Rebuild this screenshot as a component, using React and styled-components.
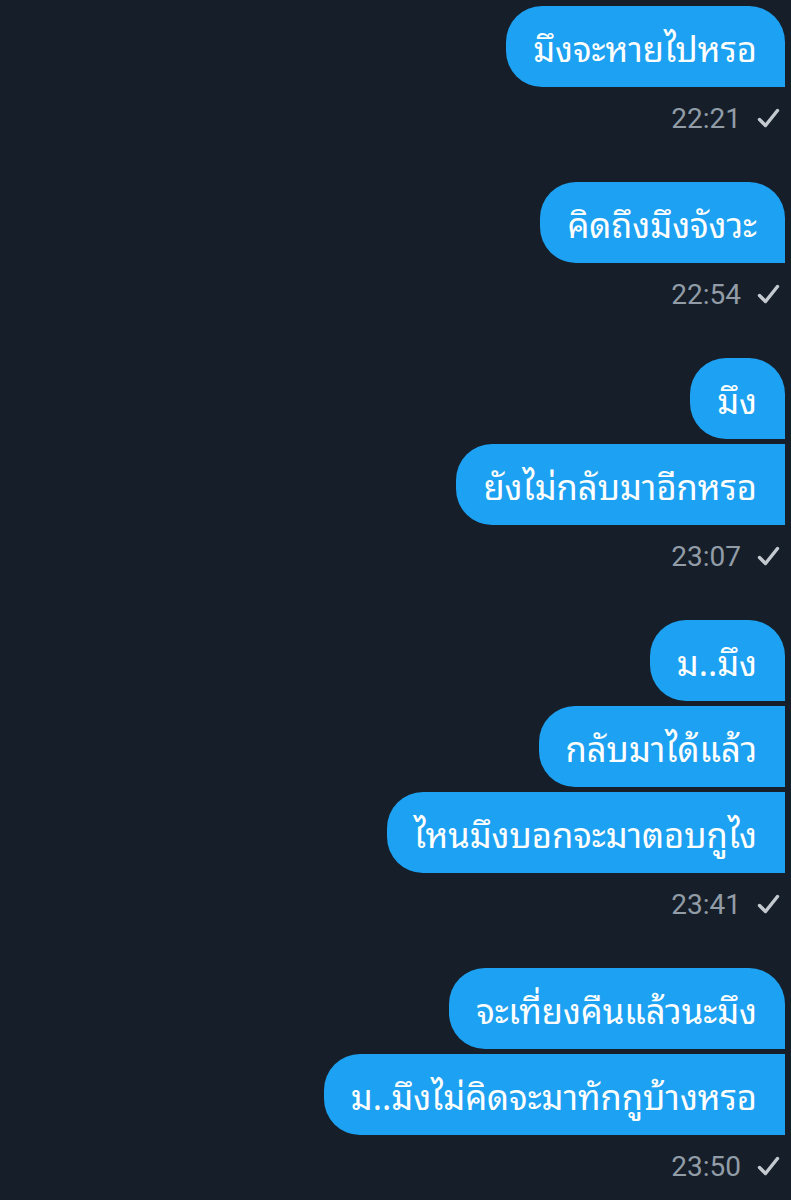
import React from "react";
import styled, { createGlobalStyle } from "styled-components";

const GlobalStyle = createGlobalStyle`
  html, body {
    margin: 0;
    padding: 0;
    background: #161f29;
  }
  body {
    font-family: Roboto, "Noto Sans Thai Looped", sans-serif;
  }
`;

const Screen = styled.div`
  width: 791px;
  min-height: 1200px;
  background: #161f29;
  box-sizing: border-box;
  padding: 6px 6px 0 0;
  display: flex;
  flex-direction: column;
  gap: 46px;
`;

const Group = styled.div`
  display: flex;
  flex-direction: column;
  align-items: flex-end;
  gap: 5px;
`;

const Bubble = styled.div`
  box-sizing: border-box;
  height: 81px;
  display: flex;
  align-items: center;
  padding: 0 28px 0 27px;
  background: #1da1f2;
  color: #ffffff;
  font-family: "Noto Sans Thai Looped", "Noto Sans Thai", sans-serif;
  font-size: 34.5px;
  white-space: nowrap;
  border-radius: ${(p) => (p.$first ? "36px 36px 0 36px" : "36px 0 0 36px")};
`;

const Meta = styled.div`
  margin-top: 8px;
  height: 36px;
  display: flex;
  align-items: center;
  gap: 16px;
  color: #919ca7;
  font-family: Roboto, "Liberation Sans", sans-serif;
  font-size: 28px;
  padding-right: 5px;
`;

const Check = () => (
  <svg width="23" height="23" viewBox="0 0 23 23">
    <polyline
      points="2.5,12.5 8.5,18.5 20.5,3.5"
      fill="none"
      stroke="#c3c9cf"
      strokeWidth="3.4"
      strokeLinecap="round"
      strokeLinejoin="round"
    />
  </svg>
);

const groups = [
  { time: "22:21", msgs: ["มึงจะหายไปหรอ"] },
  { time: "22:54", msgs: ["คิดถึงมึงจังวะ"] },
  { time: "23:07", msgs: ["มึง", "ยังไม่กลับมาอีกหรอ"] },
  { time: "23:41", msgs: ["ม..มึง", "กลับมาได้แล้ว", "ไหนมึงบอกจะมาตอบกูไง"] },
  { time: "23:50", msgs: ["จะเที่ยงคืนแล้วนะมึง", "ม..มึงไม่คิดจะมาทักกูบ้างหรอ"] },
];

export default function App() {
  return (
    <>
      <GlobalStyle />
      <Screen>
        {groups.map((g) => (
          <Group key={g.time}>
            {g.msgs.map((m, i) => (
              <Bubble key={i} $first={i === 0}>
                {m}
              </Bubble>
            ))}
            <Meta>
              <span>{g.time}</span>
              <Check />
            </Meta>
          </Group>
        ))}
      </Screen>
    </>
  );
}
